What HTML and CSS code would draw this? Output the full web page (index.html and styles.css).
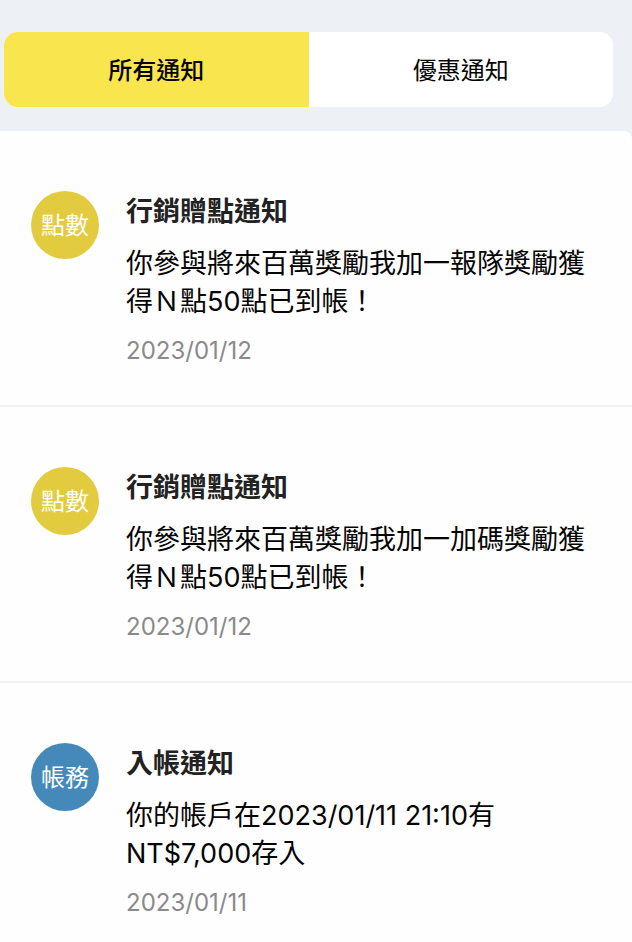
FILE: index.html
```html
<!DOCTYPE html>
<html lang="zh-Hant">
<head>
<meta charset="utf-8">
<meta name="viewport" content="width=device-width, initial-scale=1">
<title>通知</title>
<link rel="stylesheet" href="styles.css">
</head>
<body>
<header class="top">
  <nav class="tabs">
    <button class="tab tab-active" type="button">所有通知</button>
    <button class="tab" type="button">優惠通知</button>
  </nav>
</header>
<main class="list">
  <article class="item">
    <div class="badge">點數</div>
    <div class="content">
      <h2 class="title">行銷贈點通知</h2>
      <p class="message">你參與將來百萬獎勵我加一報隊獎勵獲得Ｎ點50點已到帳！</p>
      <time class="date">2023/01/12</time>
    </div>
  </article>
  <article class="item">
    <div class="badge">點數</div>
    <div class="content">
      <h2 class="title">行銷贈點通知</h2>
      <p class="message">你參與將來百萬獎勵我加一加碼獎勵獲得Ｎ點50點已到帳！</p>
      <time class="date">2023/01/12</time>
    </div>
  </article>
  <article class="item">
    <div class="badge badge-account">帳務</div>
    <div class="content">
      <h2 class="title">入帳通知</h2>
      <p class="message">你的帳戶在2023/01/11 21:10有<br>NT$7,000存入</p>
      <time class="date">2023/01/11</time>
    </div>
  </article>
</main>
</body>
</html>
```
FILE: styles.css
```css
* {
  box-sizing: border-box;
}

body {
  margin: 0;
  background: #edf1f5;
  color: #050505;
  font-family: Inter, "Noto Sans CJK TC", sans-serif;
}

.top {
  padding: 32px 19px 24px 4px;
}

.tabs {
  display: flex;
  overflow: hidden;
  border-radius: 14px;
  background: #fff;
}

.tab {
  flex: 1;
  height: 75px;
  padding: 0 0 2px;
  border: 0;
  background: #fff;
  color: #050505;
  font-family: inherit;
  font-size: 24px;
}

.tab-active {
  background: #f9e54d;
  font-weight: 500;
}

.list {
  min-height: calc(100vh - 131px);
  border-radius: 0 8px 0 0;
  background: #fefefe;
}

.item {
  display: flex;
  gap: 27px;
  padding: 60px 36px 36px 31px;
  border-bottom: 2px solid #f2f2f3;
}

.item:last-child {
  padding-bottom: 20px;
  border-bottom: 0;
}

.badge {
  display: grid;
  flex: none;
  place-items: center;
  width: 68px;
  height: 68px;
  padding-bottom: 3px;
  border-radius: 50%;
  background: #e3cb40;
  color: #fff;
  font-size: 24px;
}

.badge-account {
  background: #4489b9;
}

.content {
  flex: 1;
  min-width: 0;
}

.title {
  margin: 0;
  color: #222;
  font-size: 27px;
  font-weight: 700;
  line-height: 42px;
}

.message {
  margin: 12px 0 0;
  font-size: 27px;
  line-height: 38px;
}

.date {
  display: block;
  margin-top: 12px;
  color: #8a8a8a;
  font-size: 24px;
  line-height: 36px;
}
```
